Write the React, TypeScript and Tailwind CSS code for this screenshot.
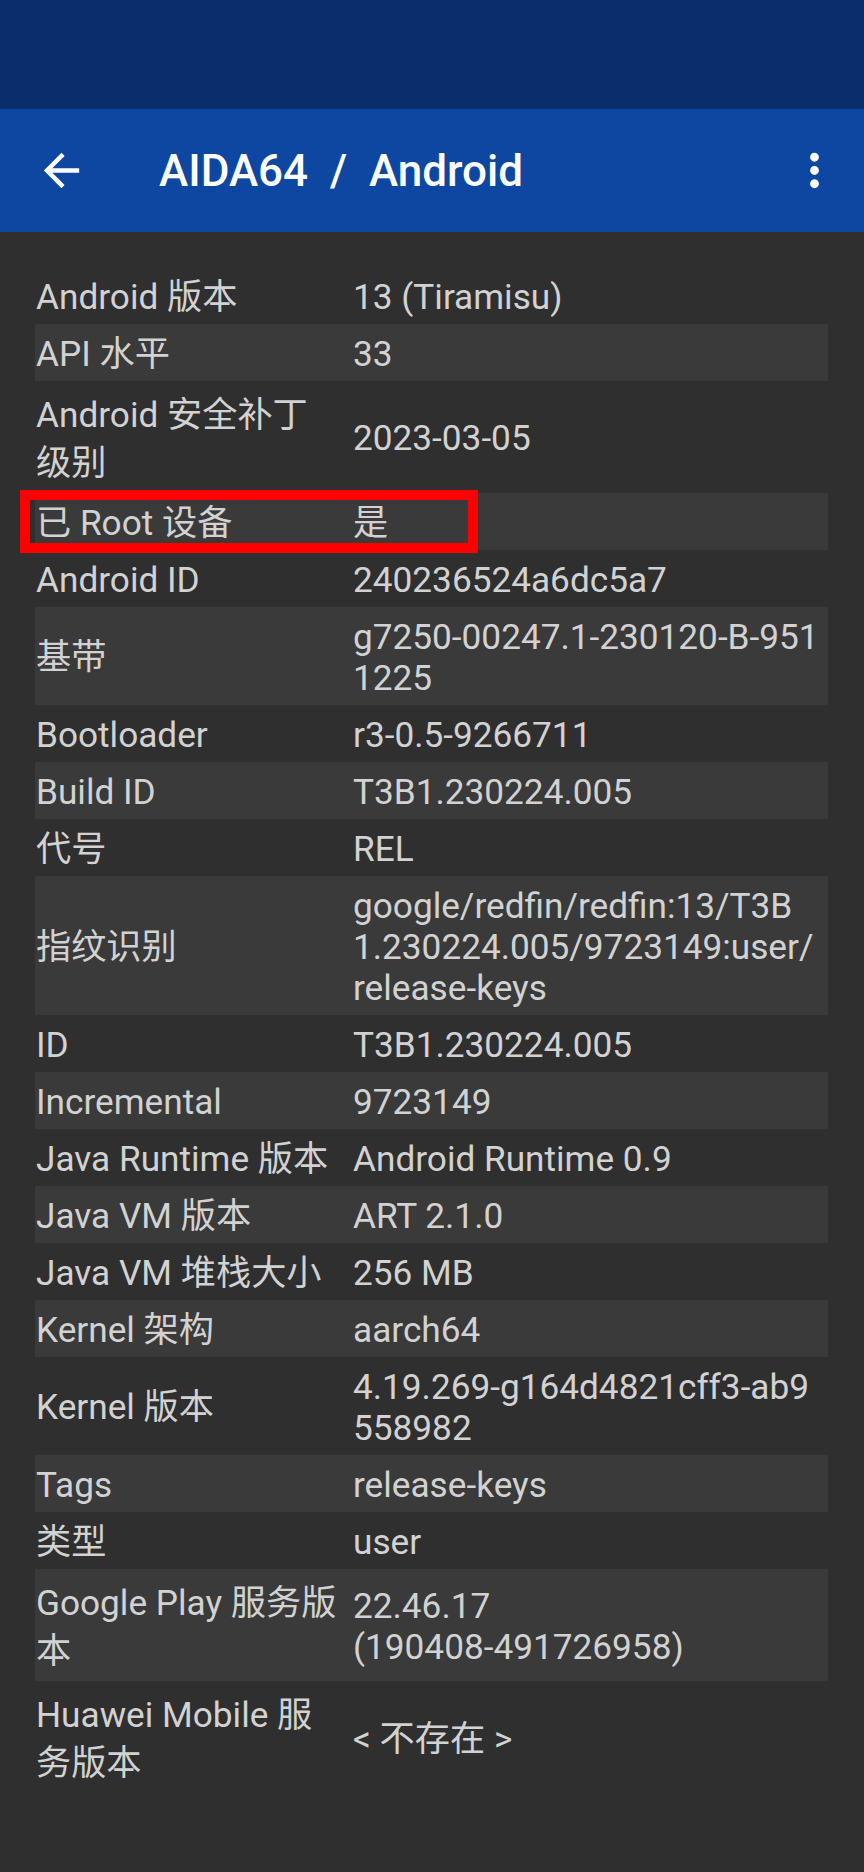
type Row = {
  label: string[];
  value: string[];
  root?: boolean;
};

const rows: Row[] = [
  { label: ["Android 版本"], value: ["13 (Tiramisu)"] },
  { label: ["API 水平"], value: ["33"] },
  { label: ["Android 安全补丁", "级别"], value: ["2023-03-05"] },
  { label: ["已 Root 设备"], value: ["是"], root: true },
  { label: ["Android ID"], value: ["240236524a6dc5a7"] },
  { label: ["基带"], value: ["g7250-00247.1-230120-B-951", "1225"] },
  { label: ["Bootloader"], value: ["r3-0.5-9266711"] },
  { label: ["Build ID"], value: ["T3B1.230224.005"] },
  { label: ["代号"], value: ["REL"] },
  {
    label: ["指纹识别"],
    value: ["google/redfin/redfin:13/T3B", "1.230224.005/9723149:user/", "release-keys"],
  },
  { label: ["ID"], value: ["T3B1.230224.005"] },
  { label: ["Incremental"], value: ["9723149"] },
  { label: ["Java Runtime 版本"], value: ["Android Runtime 0.9"] },
  { label: ["Java VM 版本"], value: ["ART 2.1.0"] },
  { label: ["Java VM 堆栈大小"], value: ["256 MB"] },
  { label: ["Kernel 架构"], value: ["aarch64"] },
  { label: ["Kernel 版本"], value: ["4.19.269-g164d4821cff3-ab9", "558982"] },
  { label: ["Tags"], value: ["release-keys"] },
  { label: ["类型"], value: ["user"] },
  { label: ["Google Play 服务版", "本"], value: ["22.46.17", "(190408-491726958)"] },
  { label: ["Huawei Mobile 服", "务版本"], value: ["< 不存在 >"] },
];

function Cell({ lines, wide }: { lines: string[]; wide?: boolean }) {
  const lead = wide ? "leading-[48.25px]" : "leading-[41.25px]";
  return (
    <div className={`pt-[9.85px] pb-[5.85px] ${lead}`}>
      {lines.map((l, i) => (
        <div key={i} className="whitespace-nowrap">
          {l}
        </div>
      ))}
    </div>
  );
}

function InfoRow({ row, shaded }: { row: Row; shaded: boolean }) {
  const wideLabel = row.label.length > 1;
  return (
    <div className={`relative flex items-center ${shaded ? "bg-[#3a3a3a]" : ""}`}>
      <div className="w-[318px] shrink-0 pl-px">
        <Cell lines={row.label} wide={wideLabel} />
      </div>
      <div className="min-w-0 flex-1">
        <Cell lines={row.value} />
      </div>
      {row.root && (
        <div className="absolute left-[-15px] top-[-3px] h-[63px] w-[458px] border-[10px] border-[#ff0000]" />
      )}
    </div>
  );
}

export default function App() {
  return (
    <div
      className="min-h-[1872px] bg-[#2f2f2f]"
      style={{ fontFamily: 'Roboto, "Noto Sans CJK SC", sans-serif' }}
    >
      <div className="h-[109px] bg-[#0a2e6c]" />
      <div className="flex h-[123px] items-center bg-[#0d47a1] text-white">
        <svg
          viewBox="0 0 24 24"
          className="ml-[35px] h-[53px] w-[53px] shrink-0"
          fill="currentColor"
        >
          <path d="M20 11H7.83l5.59-5.59L12 4l-8 8 8 8 1.41-1.41L7.83 13H20v-2z" />
        </svg>
        <div className="ml-[71px] flex-1 text-[44px] font-medium leading-none">
          AIDA64&nbsp;&nbsp;/&nbsp;&nbsp;Android
        </div>
        <svg
          viewBox="0 0 24 24"
          className="mr-[23px] h-[53px] w-[53px] shrink-0"
          fill="currentColor"
        >
          <path d="M12 8c1.1 0 2-.9 2-2s-.9-2-2-2-2 .9-2 2 .9 2 2 2zm0 2c-1.1 0-2 .9-2 2s.9 2 2 2 2-.9 2-2-.9-2-2-2zm0 6c-1.1 0-2 .9-2 2s.9 2 2 2 2-.9 2-2-.9-2-2-2z" />
        </svg>
      </div>
      <div className="pl-[35px] pr-[36px] pt-[35px] text-[35.2px] text-[#d2d2d2]">
        {rows.map((r, i) => (
          <InfoRow key={i} row={r} shaded={i % 2 === 1} />
        ))}
      </div>
    </div>
  );
}
